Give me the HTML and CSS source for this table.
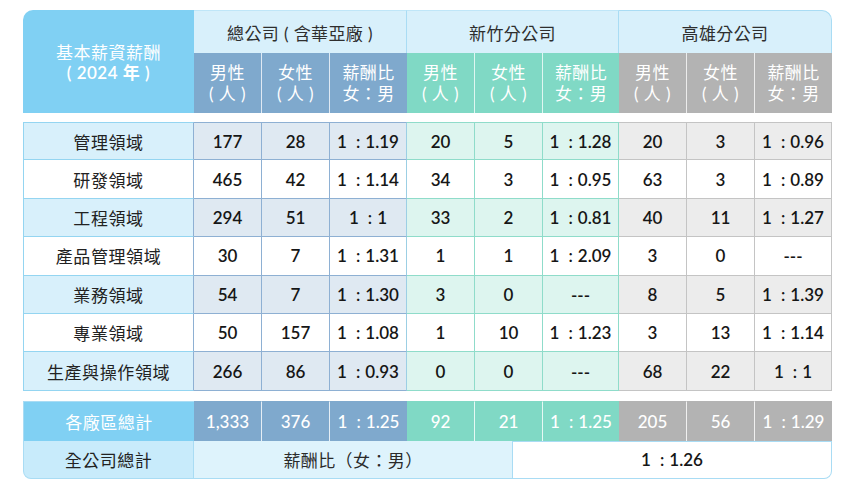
FILE: index.html
```html
<!DOCTYPE html>
<html lang="zh-Hant">
<head>
<meta charset="utf-8">
<title>基本薪資薪酬</title>
<link rel="stylesheet" href="styles.css">
</head>
<body>
<div class="sheet">
  <div class="head">
    <div class="h-label"><span>基本薪資薪酬</span><span>( 2024 年 )</span></div>
    <div class="h-group g1">總公司 ( 含華亞廠 )</div>
    <div class="h-group g2">新竹分公司</div>
    <div class="h-group g3">高雄分公司</div>
    <div class="sub g1"><span>男性</span><span>( 人 )</span></div>
    <div class="sub g1"><span>女性</span><span>( 人 )</span></div>
    <div class="sub g1 end"><span>薪酬比</span><span>女：男</span></div>
    <div class="sub g2"><span>男性</span><span>( 人 )</span></div>
    <div class="sub g2"><span>女性</span><span>( 人 )</span></div>
    <div class="sub g2 end"><span>薪酬比</span><span>女：男</span></div>
    <div class="sub g3"><span>男性</span><span>( 人 )</span></div>
    <div class="sub g3"><span>女性</span><span>( 人 )</span></div>
    <div class="sub g3 end"><span>薪酬比</span><span>女：男</span></div>
  </div>

  <div class="body">
    <div class="row odd">
      <div class="lab">管理領域</div>
      <div class="c g1">177</div><div class="c g1">28</div><div class="c g1 end">1<span class="k">:</span>1.19</div>
      <div class="c g2">20</div><div class="c g2">5</div><div class="c g2 end">1<span class="k">:</span>1.28</div>
      <div class="c g3">20</div><div class="c g3">3</div><div class="c g3 end">1<span class="k">:</span>0.96</div>
    </div>
    <div class="row">
      <div class="lab">研發領域</div>
      <div class="c g1">465</div><div class="c g1">42</div><div class="c g1 end">1<span class="k">:</span>1.14</div>
      <div class="c g2">34</div><div class="c g2">3</div><div class="c g2 end">1<span class="k">:</span>0.95</div>
      <div class="c g3">63</div><div class="c g3">3</div><div class="c g3 end">1<span class="k">:</span>0.89</div>
    </div>
    <div class="row odd">
      <div class="lab">工程領域</div>
      <div class="c g1">294</div><div class="c g1">51</div><div class="c g1 end">1<span class="k">:</span>1</div>
      <div class="c g2">33</div><div class="c g2">2</div><div class="c g2 end">1<span class="k">:</span>0.81</div>
      <div class="c g3">40</div><div class="c g3">11</div><div class="c g3 end">1<span class="k">:</span>1.27</div>
    </div>
    <div class="row">
      <div class="lab">產品管理領域</div>
      <div class="c g1">30</div><div class="c g1">7</div><div class="c g1 end">1<span class="k">:</span>1.31</div>
      <div class="c g2">1</div><div class="c g2">1</div><div class="c g2 end">1<span class="k">:</span>2.09</div>
      <div class="c g3">3</div><div class="c g3">0</div><div class="c g3 end">---</div>
    </div>
    <div class="row odd">
      <div class="lab">業務領域</div>
      <div class="c g1">54</div><div class="c g1">7</div><div class="c g1 end">1<span class="k">:</span>1.30</div>
      <div class="c g2">3</div><div class="c g2">0</div><div class="c g2 end">---</div>
      <div class="c g3">8</div><div class="c g3">5</div><div class="c g3 end">1<span class="k">:</span>1.39</div>
    </div>
    <div class="row">
      <div class="lab">專業領域</div>
      <div class="c g1">50</div><div class="c g1">157</div><div class="c g1 end">1<span class="k">:</span>1.08</div>
      <div class="c g2">1</div><div class="c g2">10</div><div class="c g2 end">1<span class="k">:</span>1.23</div>
      <div class="c g3">3</div><div class="c g3">13</div><div class="c g3 end">1<span class="k">:</span>1.14</div>
    </div>
    <div class="row odd">
      <div class="lab">生產與操作領域</div>
      <div class="c g1">266</div><div class="c g1">86</div><div class="c g1 end">1<span class="k">:</span>0.93</div>
      <div class="c g2">0</div><div class="c g2">0</div><div class="c g2 end">---</div>
      <div class="c g3">68</div><div class="c g3">22</div><div class="c g3 end">1<span class="k">:</span>1</div>
    </div>
  </div>

  <div class="foot">
    <div class="totals">
      <div class="t-lab">各廠區總計</div>
      <div class="t g1">1,333</div><div class="t g1">376</div><div class="t g1 end">1<span class="k">:</span>1.25</div>
      <div class="t g2">92</div><div class="t g2">21</div><div class="t g2 end">1<span class="k">:</span>1.25</div>
      <div class="t g3">205</div><div class="t g3">56</div><div class="t g3 end">1<span class="k">:</span>1.29</div>
    </div>
    <div class="final">
      <div class="f-lab">全公司總計</div>
      <div class="f-mid">薪酬比（女：男）</div>
      <div class="f-val">1<span class="k">:</span>1.26</div>
    </div>
  </div>
</div>
</body>
</html>
```

FILE: styles.css
```css
:root {
  --cols: 171px 68px 68px 77px 68px 68px 76px 68px 68px 77px;
  --sky: #80d0f3;
  --pale: #d8f0fb;
  --line: #a9dcf4;
  --g1: #7fa9cd;
  --g2: #80d9c5;
  --g3: #b3b3b3;
}

* { box-sizing: border-box; }

body {
  margin: 0;
  background: #fff;
  font-family: "Lato", "Noto Sans CJK TC", sans-serif;
  font-size: 17px;
  color: #1e1e1e;
}

.sheet {
  width: 809px;
  margin: 10px 0 0 23px;
}

.k {
  display: inline-block;
  margin: 0 5px 0 9px;
}

/* ---------- header ---------- */
.head {
  display: grid;
  grid-template-columns: var(--cols);
  grid-template-rows: 43px 60px;
}

.h-label {
  grid-row: span 2;
  background: var(--sky);
  color: #fff;
  border-top-left-radius: 10px;
  display: flex;
  flex-direction: column;
  align-items: center;
  justify-content: center;
  line-height: 20px;
  letter-spacing: 0.5px;
  padding-top: 3px;
}

.h-label span:last-child { font-weight: 600; }

.h-group {
  grid-column: span 3;
  background: var(--pale);
  color: #2e2e2e;
  display: flex;
  align-items: center;
  justify-content: center;
  border-top: 1px solid #bfe6f8;
  letter-spacing: 0.4px;
  padding-top: 1px;
}

.h-group.g1,
.h-group.g2 { border-right: 1px solid var(--line); }

.h-group.g3 {
  border-right: 1px solid var(--line);
  border-top: 1px solid var(--line);
  border-top-right-radius: 10px;
}

.sub {
  color: #fff;
  display: flex;
  flex-direction: column;
  align-items: center;
  justify-content: center;
  line-height: 21px;
  border-right: 1px solid rgba(255, 255, 255, 0.75);
  letter-spacing: 0.4px;
}

.sub.end { border-right: 0; }
.sub.g1 { background: var(--g1); }
.sub.g2 { background: var(--g2); }
.sub.g3 { background: var(--g3); }

/* ---------- body ---------- */
.body {
  display: grid;
  grid-template-columns: var(--cols);
  grid-auto-rows: 38.4px;
  margin-top: 9px;
}

.row { display: contents; }

.lab,
.c {
  display: flex;
  align-items: center;
  justify-content: center;
  border-right: 1px solid;
  border-bottom: 1px solid;
  background: #fff;
}

.row:first-child > * {
  border-top-width: 1px;
  border-top-style: solid;
}

.lab {
  border-left: 1px solid #94d5f1;
  border-color: #94d5f1;
  border-right-color: #8eb0d3;
  letter-spacing: 0.6px;
  color: #222;
}

.c {
  font-weight: 600;
  color: #161616;
}

.c.g1 { border-color: #8eb0d3; }
.c.g1.end { border-right-color: #9ccfe4; }
.c.g2 { border-color: #8fdcca; }
.c.g3 { border-color: #c4c4c4; }

.row.odd .lab { background: var(--pale); }
.row.odd .g1 { background: #dfe9f2; }
.row.odd .g2 { background: #ddf5ef; }
.row.odd .g3 { background: #ececec; }

/* ---------- footer ---------- */
.foot { margin-top: 10px; }

.totals {
  display: grid;
  grid-template-columns: var(--cols);
  height: 40px;
}

.t-lab,
.t {
  display: flex;
  align-items: center;
  justify-content: center;
  color: #fff;
  border-right: 1px solid rgba(255, 255, 255, 0.8);
  border-top: 1px solid var(--line);
}

.t-lab {
  background: var(--sky);
  border-left: 1px solid var(--line);
  border-right: 0;
  letter-spacing: 0.5px;
}

.t { font-weight: 500; }
.t.end { border-right: 0; }
.t.g1 { background: var(--g1); border-top-color: var(--g1); }
.t.g2 { background: var(--g2); border-top-color: var(--g2); }
.t.g3 { background: var(--g3); border-top-color: var(--g3); }

.final {
  display: grid;
  grid-template-columns: 171px 319px 319px;
  height: 38px;
}

.f-lab,
.f-mid,
.f-val {
  display: flex;
  align-items: center;
  justify-content: center;
  border-bottom: 1px solid var(--line);
  border-right: 1px solid var(--line);
}

.f-lab {
  background: #c8ebfb;
  border-left: 1px solid var(--line);
  border-bottom-left-radius: 8px;
  letter-spacing: 0.5px;
  color: #222;
}

.f-mid {
  background: #def3fc;
  color: #2a2a2a;
  letter-spacing: 0.4px;
}

.f-val {
  background: #fff;
  border-top: 1px solid var(--line);
  border-bottom-right-radius: 8px;
  font-weight: 600;
  color: #161616;
}
```
